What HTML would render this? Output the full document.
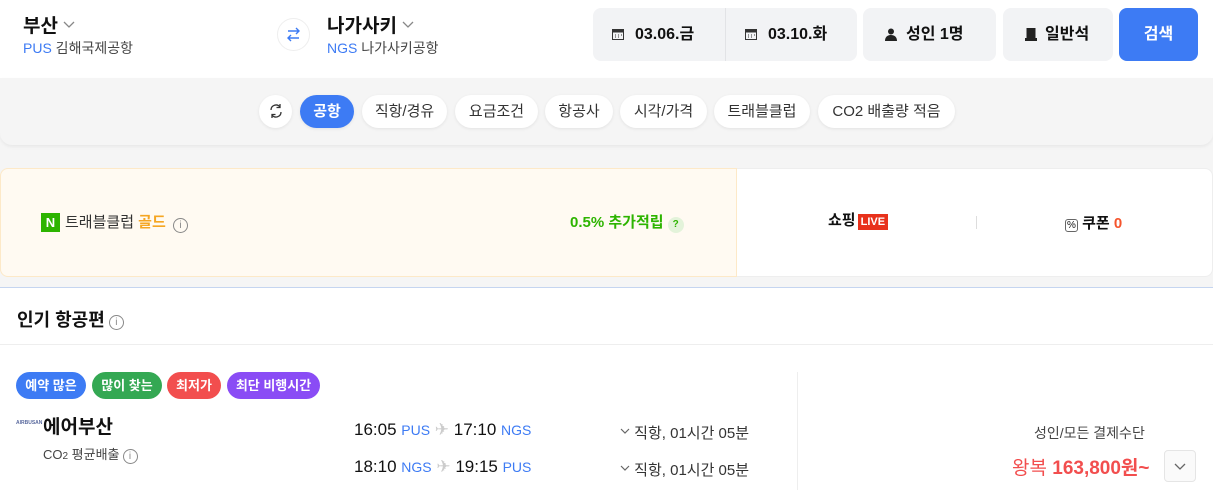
<!DOCTYPE html>
<html><head><meta charset="utf-8"><style>
*{box-sizing:border-box;margin:0;padding:0}
body{width:1213px;height:504px;overflow:hidden;background:#fff;font-family:"Liberation Sans","Noto Sans CJK KR",sans-serif;color:#111;position:relative}
.a{position:absolute}
.blue{color:#3d7bf4}
.pill{position:absolute;top:95px;height:33px;border-radius:17px;background:#fff;box-shadow:0 1px 3px rgba(0,0,0,.08);font-size:15px;color:#333;line-height:33px;text-align:center}
.box{position:absolute;top:8px;height:53px;background:#f2f3f5;border-radius:8px;font-size:16px;font-weight:bold;line-height:53px}
.tag{position:absolute;top:372px;height:27px;border-radius:14px;color:#fff;font-size:13px;font-weight:bold;line-height:27px;text-align:center}
.info{display:inline-block;width:15px;height:15px;border:1px solid #888;border-radius:50%;font-size:10px;text-align:center;line-height:13px;color:#888;font-weight:normal}
svg{display:inline-block}
</style></head><body>
<div class="a" style="left:23px;top:11px;font-size:19px;font-weight:bold">부산 <svg width="12" height="8" viewBox="0 0 12 8" style="vertical-align:3px"><path d="M1 1l5 5 5-5" fill="none" stroke="#888" stroke-width="1.3"/></svg></div>
<div class="a" style="left:23px;top:38px;font-size:14px;color:#444"><span class="blue">PUS</span> 김해국제공항</div>
<div class="a" style="left:277px;top:18px;width:33px;height:33px;border-radius:50%;border:1px solid #eee"><svg width="33" height="33" viewBox="0 0 33 33" style="position:absolute;left:-1px;top:-1px"><path d="M11 13h11M19 10l3 3-3 3M22 20H11M14 17l-3 3 3 3" fill="none" stroke="#3d7bf4" stroke-width="1.4"/></svg></div>
<div class="a" style="left:327px;top:11px;font-size:19px;font-weight:bold">나가사키 <svg width="12" height="8" viewBox="0 0 12 8" style="vertical-align:3px"><path d="M1 1l5 5 5-5" fill="none" stroke="#888" stroke-width="1.3"/></svg></div>
<div class="a" style="left:327px;top:38px;font-size:14px;color:#444"><span class="blue">NGS</span> 나가사키공항</div>
<div class="box" style="left:593px;width:264px"></div>
<div class="a" style="left:725px;top:8px;width:1px;height:53px;background:#e2e3e6"></div>
<svg class="a" style="left:612px;top:28px" width="12" height="12" viewBox="0 0 12 12"><rect x="0.5" y="1.5" width="11" height="10" fill="none" stroke="#333"/><rect x="0.5" y="1.5" width="11" height="3" fill="#333"/><path d="M3 7h1M6 7h1M9 7h1M3 9h1M6 9h1" stroke="#333"/></svg>
<div class="a" style="left:635px;top:8px;line-height:53px;font-size:16px;font-weight:bold">03.06.금</div>
<svg class="a" style="left:745px;top:28px" width="12" height="12" viewBox="0 0 12 12"><rect x="0.5" y="1.5" width="11" height="10" fill="none" stroke="#333"/><rect x="0.5" y="1.5" width="11" height="3" fill="#333"/><path d="M3 7h1M6 7h1M9 7h1M3 9h1M6 9h1" stroke="#333"/></svg>
<div class="a" style="left:768px;top:8px;line-height:53px;font-size:16px;font-weight:bold">03.10.화</div>
<div class="box" style="left:863px;width:133px"></div>
<svg class="a" style="left:885px;top:28px" width="12" height="13" viewBox="0 0 12 13"><circle cx="6" cy="3.5" r="3" fill="#222"/><path d="M0 13c0-4 2.5-6 6-6s6 2 6 6z" fill="#222"/></svg>
<div class="a" style="left:906px;top:8px;line-height:53px;font-size:16px;font-weight:bold">성인 1명</div>
<div class="box" style="left:1003px;width:110px"></div>
<svg class="a" style="left:1025px;top:28px" width="12" height="13" viewBox="0 0 12 13"><rect x="1.5" y="0" width="9" height="10" fill="#222"/><rect x="0" y="10" width="12" height="3" fill="#222"/></svg>
<div class="a" style="left:1045px;top:8px;line-height:53px;font-size:16px;font-weight:bold">일반석</div>
<div class="box" style="left:1119px;width:79px;background:#3d7bf4;color:#fff;text-align:center">검색</div>

<div class="a" style="left:0;top:78px;width:1213px;height:210px;background:#f5f5f5"></div>
<div class="a" style="left:0;top:78px;width:1213px;height:67px;background:#f5f5f5;border-radius:0 0 12px 12px;box-shadow:0 2px 3px rgba(0,0,0,.05)"></div>
<div class="pill" style="left:259px;width:33px"><svg width="16" height="16" viewBox="0 0 16 16" style="vertical-align:-3px"><path d="M3 7a5 5 0 0 1 9-3M13 9a5 5 0 0 1-9 3" fill="none" stroke="#333" stroke-width="1.3"/><path d="M12 1v3.5H8.5M4 15v-3.5h3.5" fill="none" stroke="#333" stroke-width="1.3"/></svg></div>
<div class="pill" style="left:300px;width:54px;background:#3d7bf4;color:#fff;font-weight:bold">공항</div>
<div class="pill" style="left:362px;width:85px">직항/경유</div>
<div class="pill" style="left:455px;width:83px">요금조건</div>
<div class="pill" style="left:545px;width:68px">항공사</div>
<div class="pill" style="left:620px;width:87px">시각/가격</div>
<div class="pill" style="left:714px;width:96px">트래블클럽</div>
<div class="pill" style="left:818px;width:137px">CO2 배출량 적음</div>

<div class="a" style="left:0;top:168px;width:1213px;height:109px;background:#fff;border-radius:8px;border:1px solid #eee"></div>
<div class="a" style="left:0;top:168px;width:737px;height:109px;background:#fffaf2;border:1px solid #fde9c8;border-radius:8px 0 0 8px"></div>
<div class="a" style="left:41px;top:213px;width:19px;height:19px;background:#2db400;color:#fff;font-weight:bold;font-size:13px;text-align:center;line-height:19px">N</div>
<div class="a" style="left:65px;top:213px;font-size:15px;color:#333;line-height:20px">트래블클럽 <b style="color:#f5a623">골드</b> <span class="info" style="vertical-align:-1px;margin-left:3px">i</span></div>
<div class="a" style="left:570px;top:213px;font-size:15px;font-weight:bold;color:#2db400;line-height:20px">0.5% 추가적립 <span style="display:inline-block;width:16px;height:16px;border-radius:50%;background:#e3f3da;font-size:10px;text-align:center;line-height:16px">?</span></div>
<div class="a" style="left:828px;top:209px;font-size:15px;font-weight:bold">쇼핑<span style="background:#e8311b;color:#fff;font-size:11px;padding:2px 3px;margin-left:2px">LIVE</span></div>
<div class="a" style="left:976px;top:216px;width:1px;height:13px;background:#ddd"></div>
<div class="a" style="left:1065px;top:212px;font-size:15px;font-weight:bold"><span style="font-size:10px;border:1px solid #666;border-radius:3px;padding:0 1px;font-weight:normal">%</span> 쿠폰 <span style="color:#f5542c">0</span></div>

<div class="a" style="left:0;top:287px;width:1213px;height:1px;background:#c5d5f0"></div>
<div class="a" style="left:17px;top:306px;font-size:18px;font-weight:bold">인기 항공편<span class="info" style="vertical-align:1px;margin-left:4px">i</span></div>
<div class="a" style="left:0;top:344px;width:1213px;height:1px;background:#eee"></div>

<div class="tag" style="left:16px;width:70px;background:#3d7bf4">예약 많은</div>
<div class="tag" style="left:92px;width:70px;background:#34a853">많이 찾는</div>
<div class="tag" style="left:167px;width:54px;background:#f24e4e">최저가</div>
<div class="tag" style="left:227px;width:93px;background:#8a4cf5">최단 비행시간</div>
<div class="a" style="left:16px;top:420px;font-size:5px;color:#5a6a9e;font-weight:bold">AIRBUSAN</div>
<div class="a" style="left:43px;top:412px;font-size:19px;font-weight:bold">에어부산</div>
<div class="a" style="left:43px;top:444px;font-size:13px;color:#444">CO<span style="font-size:10px">2</span> 평균배출<span class="info" style="margin-left:3px">i</span></div>
<div class="a" style="left:354px;top:420px;font-size:17px">16:05 <span class="blue" style="font-size:14px">PUS</span> <span style="color:#ccc">✈</span> 17:10 <span class="blue" style="font-size:14px">NGS</span></div>
<div class="a" style="left:354px;top:457px;font-size:17px">18:10 <span class="blue" style="font-size:14px">NGS</span> <span style="color:#ccc">✈</span> 19:15 <span class="blue" style="font-size:14px">PUS</span></div>
<div class="a" style="left:620px;top:422px;font-size:15px;color:#333"><svg width="10" height="7" viewBox="0 0 10 7" style="vertical-align:3px"><path d="M1 1l4 4 4-4" fill="none" stroke="#666" stroke-width="1.2"/></svg> 직항, 01시간 05분</div>
<div class="a" style="left:620px;top:459px;font-size:15px;color:#333"><svg width="10" height="7" viewBox="0 0 10 7" style="vertical-align:3px"><path d="M1 1l4 4 4-4" fill="none" stroke="#666" stroke-width="1.2"/></svg> 직항, 01시간 05분</div>
<div class="a" style="left:797px;top:372px;width:1px;height:118px;background:#eee"></div>
<div class="a" style="left:1034px;top:423px;font-size:14px;color:#444">성인/모든 결제수단</div>
<div class="a" style="left:1012px;top:453px;font-size:19px;color:#f24e4e">왕복 <b>163,800원~</b></div>
<div class="a" style="left:1164px;top:450px;width:32px;height:32px;border:1px solid #e5e5e5;border-radius:4px;background:#fafafa"><svg width="30" height="30" viewBox="0 0 30 30"><path d="M10 13l5 5 5-5" fill="none" stroke="#666" stroke-width="1.3"/></svg></div>
</body></html>
